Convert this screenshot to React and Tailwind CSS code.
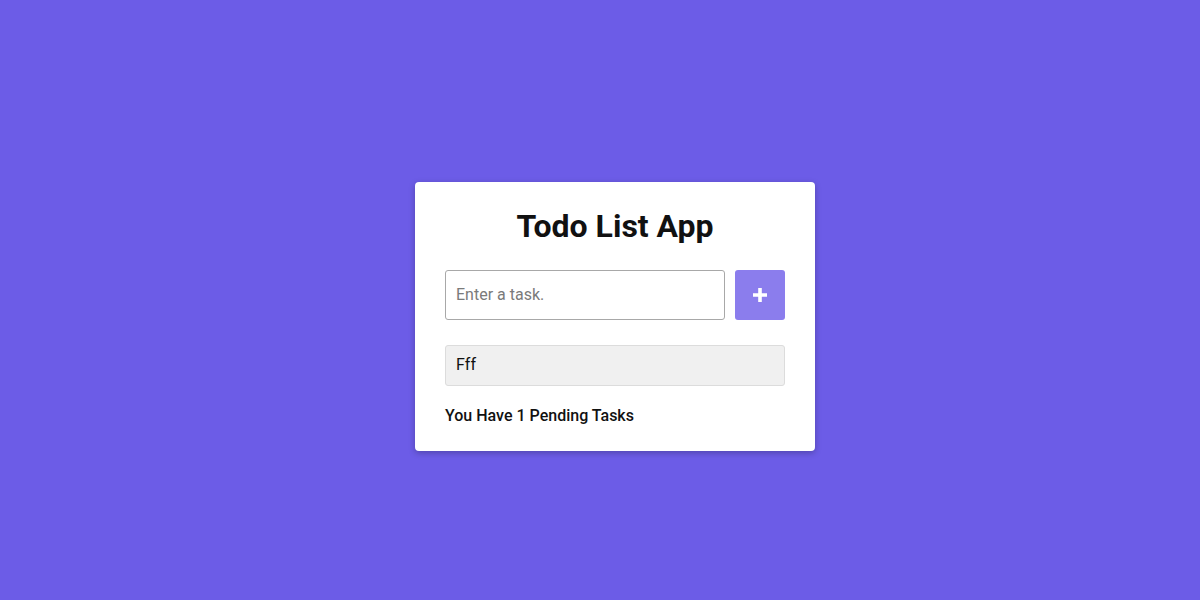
import React, { useState } from 'react';

export default function App() {
  const [tasks] = useState(['Fff']);
  const [text, setText] = useState('');

  return (
    <div className="min-h-[600px] w-full bg-[#6c5ce7] flex items-center justify-center pt-8 pl-[30px] font-['Roboto',sans-serif]">
      <div className="w-[400px] bg-white rounded-[4px] shadow-[0_2px_6px_rgba(0,0,0,0.25)] px-[30px] pt-[24px] pb-[23px]">
        <h1 className="text-[32px] font-bold text-[#111] text-center leading-[40px]">Todo List App</h1>

        {/* input row */}
        <div className="flex gap-[10px] mt-[24px]">
          <input
            className="w-[280px] h-[50px] border border-[#a8a8a8] rounded-[3px] px-[10px] text-[16px] text-[#222] placeholder:text-[#7a7a7a] outline-none"
            placeholder="Enter a task."
            value={text}
            onChange={e => setText(e.target.value)}
          />
          <button className="w-[50px] h-[50px] rounded-[3px] bg-[#8b7ded] flex items-center justify-center">
            <svg width="14" height="14" viewBox="0 0 14 14">
              <path d="M5.2 0h3.6v5.2H14v3.6H8.8V14H5.2V8.8H0V5.2h5.2z" fill="#fff" />
            </svg>
          </button>
        </div>

        {/* tasks */}
        <ul className="mt-[25px]">
          {tasks.map(t => (
            <li key={t} className="h-[41px] bg-[#f0f0f0] border border-[#dcdcdc] rounded-[3px] px-[10px] flex items-center text-[16px] text-[#111]">
              {t}
            </li>
          ))}
        </ul>

        <p className="mt-[18px] text-[16px] font-medium text-[#111] leading-[24px]">
          You Have {tasks.length} Pending Tasks
        </p>
      </div>
    </div>
  );
}
